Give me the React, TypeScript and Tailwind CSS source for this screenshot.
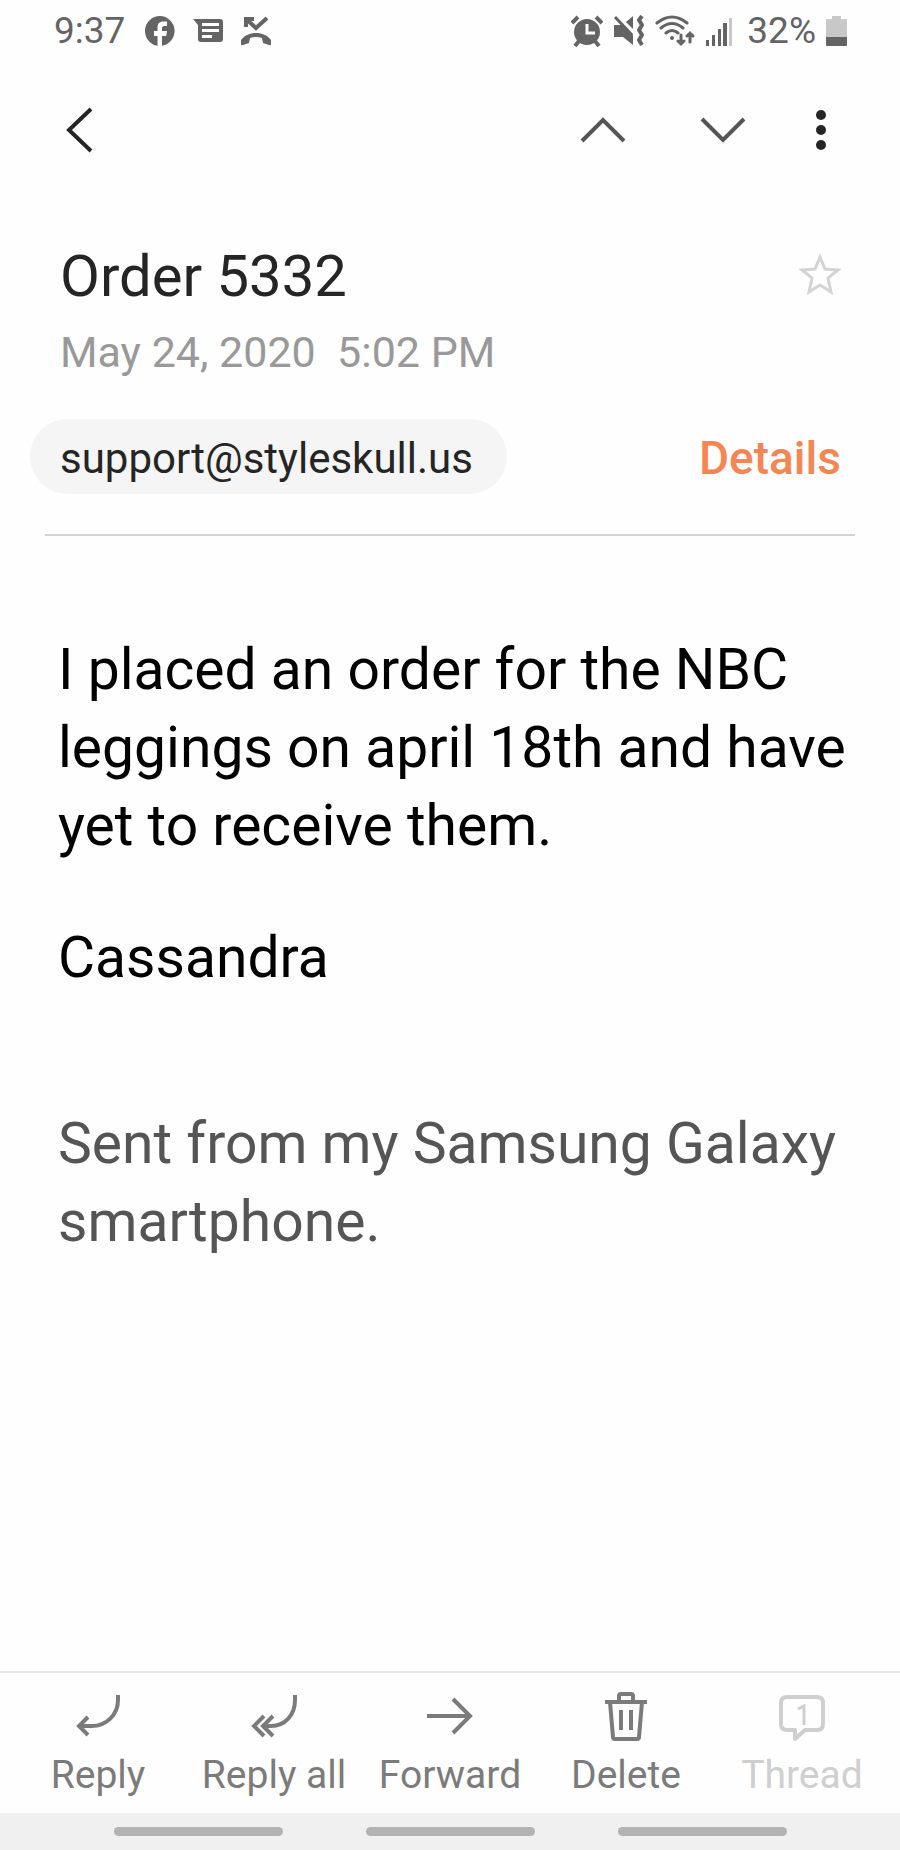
import type { ReactNode } from "react";

interface Action {
  label: string;
  icon: ReactNode;
  disabled?: boolean;
}

// shared props for the thin outlined icons of the bottom bar
const line = {
  width: 48,
  height: 52,
  viewBox: "0 0 48 52",
  fill: "none",
  stroke: "currentColor",
  strokeWidth: 4,
};

const actions: Action[] = [
  {
    label: "Reply",
    icon: (
      <svg {...line}>
        <path d="M44 5v5c0 15-12 26-26 26H5" />
        <path d="M14 27l-9 9 9 9" />
      </svg>
    ),
  },
  {
    label: "Reply all",
    icon: (
      <svg {...line}>
        <path d="M45 5v5c0 15-10 26-24 26h-6" />
        <path d="M14 26L4 36l10 10M23 26L13 36l10 10" />
      </svg>
    ),
  },
  {
    label: "Forward",
    icon: (
      <svg {...line}>
        <path d="M1 26h43M27 9l17 17-17 17" />
      </svg>
    ),
  },
  {
    label: "Delete",
    icon: (
      <svg {...line}>
        <path d="M3 12h42M17 12V6q0-2 2-2h10q2 0 2 2v6" />
        <path d="M8 12l3 35q0 2 2 2h22q2 0 2-2l3-35M19 20v20M29 20v20" />
      </svg>
    ),
  },
  {
    label: "Thread",
    disabled: true,
    icon: (
      <svg {...line}>
        <path
          d="M9 7h30q6 0 6 6v21q0 6-6 6H27l-10 9v-9H9q-6 0-6-6V13q0-6 6-6z"
          strokeLinejoin="round"
        />
        <path d="M20 19l6-3v19" strokeWidth={3} />
      </svg>
    ),
  },
];

function StatusBar() {
  return (
    <div className="flex h-[62px] items-center justify-between pl-[54px] pr-[53px] text-[37px] text-[#646464]">
      <div className="flex items-center">
        <span>9:37</span>
        <svg className="ml-[20px]" width="30" height="30" viewBox="0 0 30 30" fill="currentColor">
          <path d="M15 0a15 15 0 0 0-2.500 29.800V20H9v-5h3.500v-3.500c0-4.500 2.500-6 6.500-6H22V10h-2.500c-1.700 0-2.500.8-2.500 2.300V15h5l-.8 5H17v9.800A15 15 0 0 0 15 0z" />
        </svg>
        <svg className="ml-[18px]" width="30" height="30" viewBox="0 0 30 30" fill="currentColor">
          <path
            fillRule="evenodd"
            d="M0 3h27q3 0 3 3v17q0 3-3 3H8q-3 0-3-3V9zM9 7v3h17V7zM9 13v3h17v-3zM9 19v3h10v-3z"
          />
        </svg>
        <svg className="ml-[17px]" width="32" height="30" viewBox="0 0 32 30" fill="currentColor">
          <path d="M6 11V3h8M6 3l10 9L27 2" fill="none" stroke="currentColor" strokeWidth="4" />
          <path d="M1 24C5 19 10 17 16 17s11 2 15 7v4q0 2-2 1l-6-2-1-5q-6-2-12 0l-1 5-6 2q-2 1-2-1z" />
        </svg>
      </div>
      <div className="flex items-center">
        <svg width="32" height="32" viewBox="0 0 32 32">
          <g stroke="currentColor" strokeWidth="4">
            <path d="M1 8l6-6M25 2l6 6M8 26l-4 5M24 26l4 5" />
          </g>
          <circle cx="16" cy="17" r="13" fill="currentColor" />
          <path d="M16 9v9h8" fill="none" stroke="#fefefe" strokeWidth="3" />
        </svg>
        <svg className="ml-[10px]" width="32" height="32" viewBox="0 0 32 32" fill="currentColor">
          <path d="M1 10h8l11 10v10l-10-8H1zM13 7l7-6v13z" />
          <path d="M2 2l17 18" stroke="currentColor" strokeWidth="3" />
          <path
            d="M29 1l-3 4 3 5-3 5 3 5-3 5 3 5"
            fill="none"
            stroke="currentColor"
            strokeWidth="4"
            strokeLinejoin="round"
          />
        </svg>
        <svg className="ml-[10px]" width="40" height="32" viewBox="0 0 40 32" fill="none">
          <g stroke="currentColor" strokeWidth="3" strokeLinecap="round">
            <path d="M2 8q15-12 30 0M6 13q11-9 22 0M11 18q6-5 12 0" />
            <path d="M26 20v9M23 26l3 3 3-3M35 27v-9M32 21l3-3 3 3" />
          </g>
          <circle cx="17" cy="23" r="2" fill="currentColor" />
        </svg>
        <svg className="ml-[11px]" width="27" height="30" viewBox="0 0 27 30" fill="currentColor">
          <path d="M0 24h3v6H0zM6 19h3v11H6zM12 13h3v17h-3zM17 7h4v23h-4z" />
          <path d="M23 2h3v28h-3z" opacity=".35" />
        </svg>
        <span className="ml-[14px]">32%</span>
        <svg className="ml-[10px]" width="21" height="30" viewBox="0 0 21 30" fill="currentColor">
          <path d="M6 0h9v3h5q1 0 1 1v17H0V4q0-1 1-1h5z" opacity=".35" />
          <path d="M0 21h21v8q0 1-1 1H1q-1 0-1-1z" />
        </svg>
      </div>
    </div>
  );
}

function Toolbar() {
  return (
    <header className="flex h-[136px] items-center justify-between pl-[60px] pr-[59px] text-[#252525]">
      <button aria-label="Back">
        <svg width="40" height="48" viewBox="0 0 40 48" fill="none" stroke="currentColor" strokeWidth="4">
          <path d="M31 3L9 24l22 21" />
        </svg>
      </button>
      <div className="flex items-center">
        <button aria-label="Previous message" className="text-[#555]">
          <svg width="48" height="48" viewBox="0 0 48 48" fill="none" stroke="currentColor" strokeWidth="4">
            <path d="M3 35l21-21 21 21" />
          </svg>
        </button>
        <button aria-label="Next message" className="ml-[72px] text-[#555]">
          <svg width="48" height="48" viewBox="0 0 48 48" fill="none" stroke="currentColor" strokeWidth="4">
            <path d="M3 13l21 21 21-21" />
          </svg>
        </button>
        <button aria-label="More options" className="ml-[54px]">
          <svg width="40" height="48" viewBox="0 0 40 48" fill="currentColor">
            <circle cx="20" cy="9" r="5" />
            <circle cx="20" cy="24" r="5" />
            <circle cx="20" cy="39" r="5" />
          </svg>
        </button>
      </div>
    </header>
  );
}

function MessageHeader() {
  return (
    <section className="mx-[45px] border-b-2 border-[#d4d4d4] pt-[42px] pb-10">
      <div className="flex items-center justify-between pl-[15px] pr-[14px]">
        <h1 className="text-[58px] leading-[72px] text-[#252525]">Order 5332</h1>
        <button aria-label="Add star" className="pb-1 text-[#d4d4d4]">
          <svg width="42" height="42" viewBox="0 0 42 42" fill="none" stroke="currentColor" strokeWidth="3">
            <path d="M21 4l5 12 13 1-10 8 3 14-11-7-11 7 3-14-10-8 13-1z" />
          </svg>
        </button>
      </div>
      <time className="mt-[14px] block pl-[15px] text-[43px] leading-[52px] whitespace-pre text-[#999]">
        May 24, 2020  5:02 PM
      </time>
      <div className="mt-[41px] flex items-center justify-between pr-[14px]">
        <button className="-ml-[15px] h-[75px] rounded-full bg-[#f5f5f5] pt-1 pr-[34px] pl-[30px] text-[42px] text-[#252525]">
          support@styleskull.us
        </button>
        <button className="pt-1 text-[46px] font-medium text-[#f58653]">Details</button>
      </div>
    </section>
  );
}

export default function App() {
  return (
    <div className="flex min-h-screen flex-col bg-[#fefefe] font-[Roboto,sans-serif]">
      <StatusBar />
      <Toolbar />
      <MessageHeader />

      <main className="flex-1 pt-[95px] pr-[40px] pl-[58px] text-[57px] leading-[78px] text-black">
        <p>I placed an order for the NBC leggings on april 18th and have yet to receive them.</p>
        <p className="mt-[54px]">Cassandra</p>
        <p className="mt-[108px] text-[#555]">Sent from my Samsung Galaxy smartphone.</p>
      </main>

      <footer>
        <div className="grid grid-cols-5 border-t-2 border-[#e8e8e8] px-[10px] pt-[17px] pb-2">
          {actions.map((a) => (
            <button
              key={a.label}
              disabled={a.disabled}
              className="flex flex-col items-center gap-[3px] text-[39px] leading-[60px] whitespace-nowrap text-[#7b7b7b] disabled:text-[#cfcfcf]"
            >
              {a.icon}
              <span>{a.label}</span>
            </button>
          ))}
        </div>
        <div className="flex h-[37px] items-center justify-center gap-[83px] bg-[#f0f0f0]">
          <span className="h-[9px] w-[169px] rounded-full bg-[#b3b3b3]" />
          <span className="h-[9px] w-[169px] rounded-full bg-[#b3b3b3]" />
          <span className="h-[9px] w-[169px] rounded-full bg-[#b3b3b3]" />
        </div>
      </footer>
    </div>
  );
}
